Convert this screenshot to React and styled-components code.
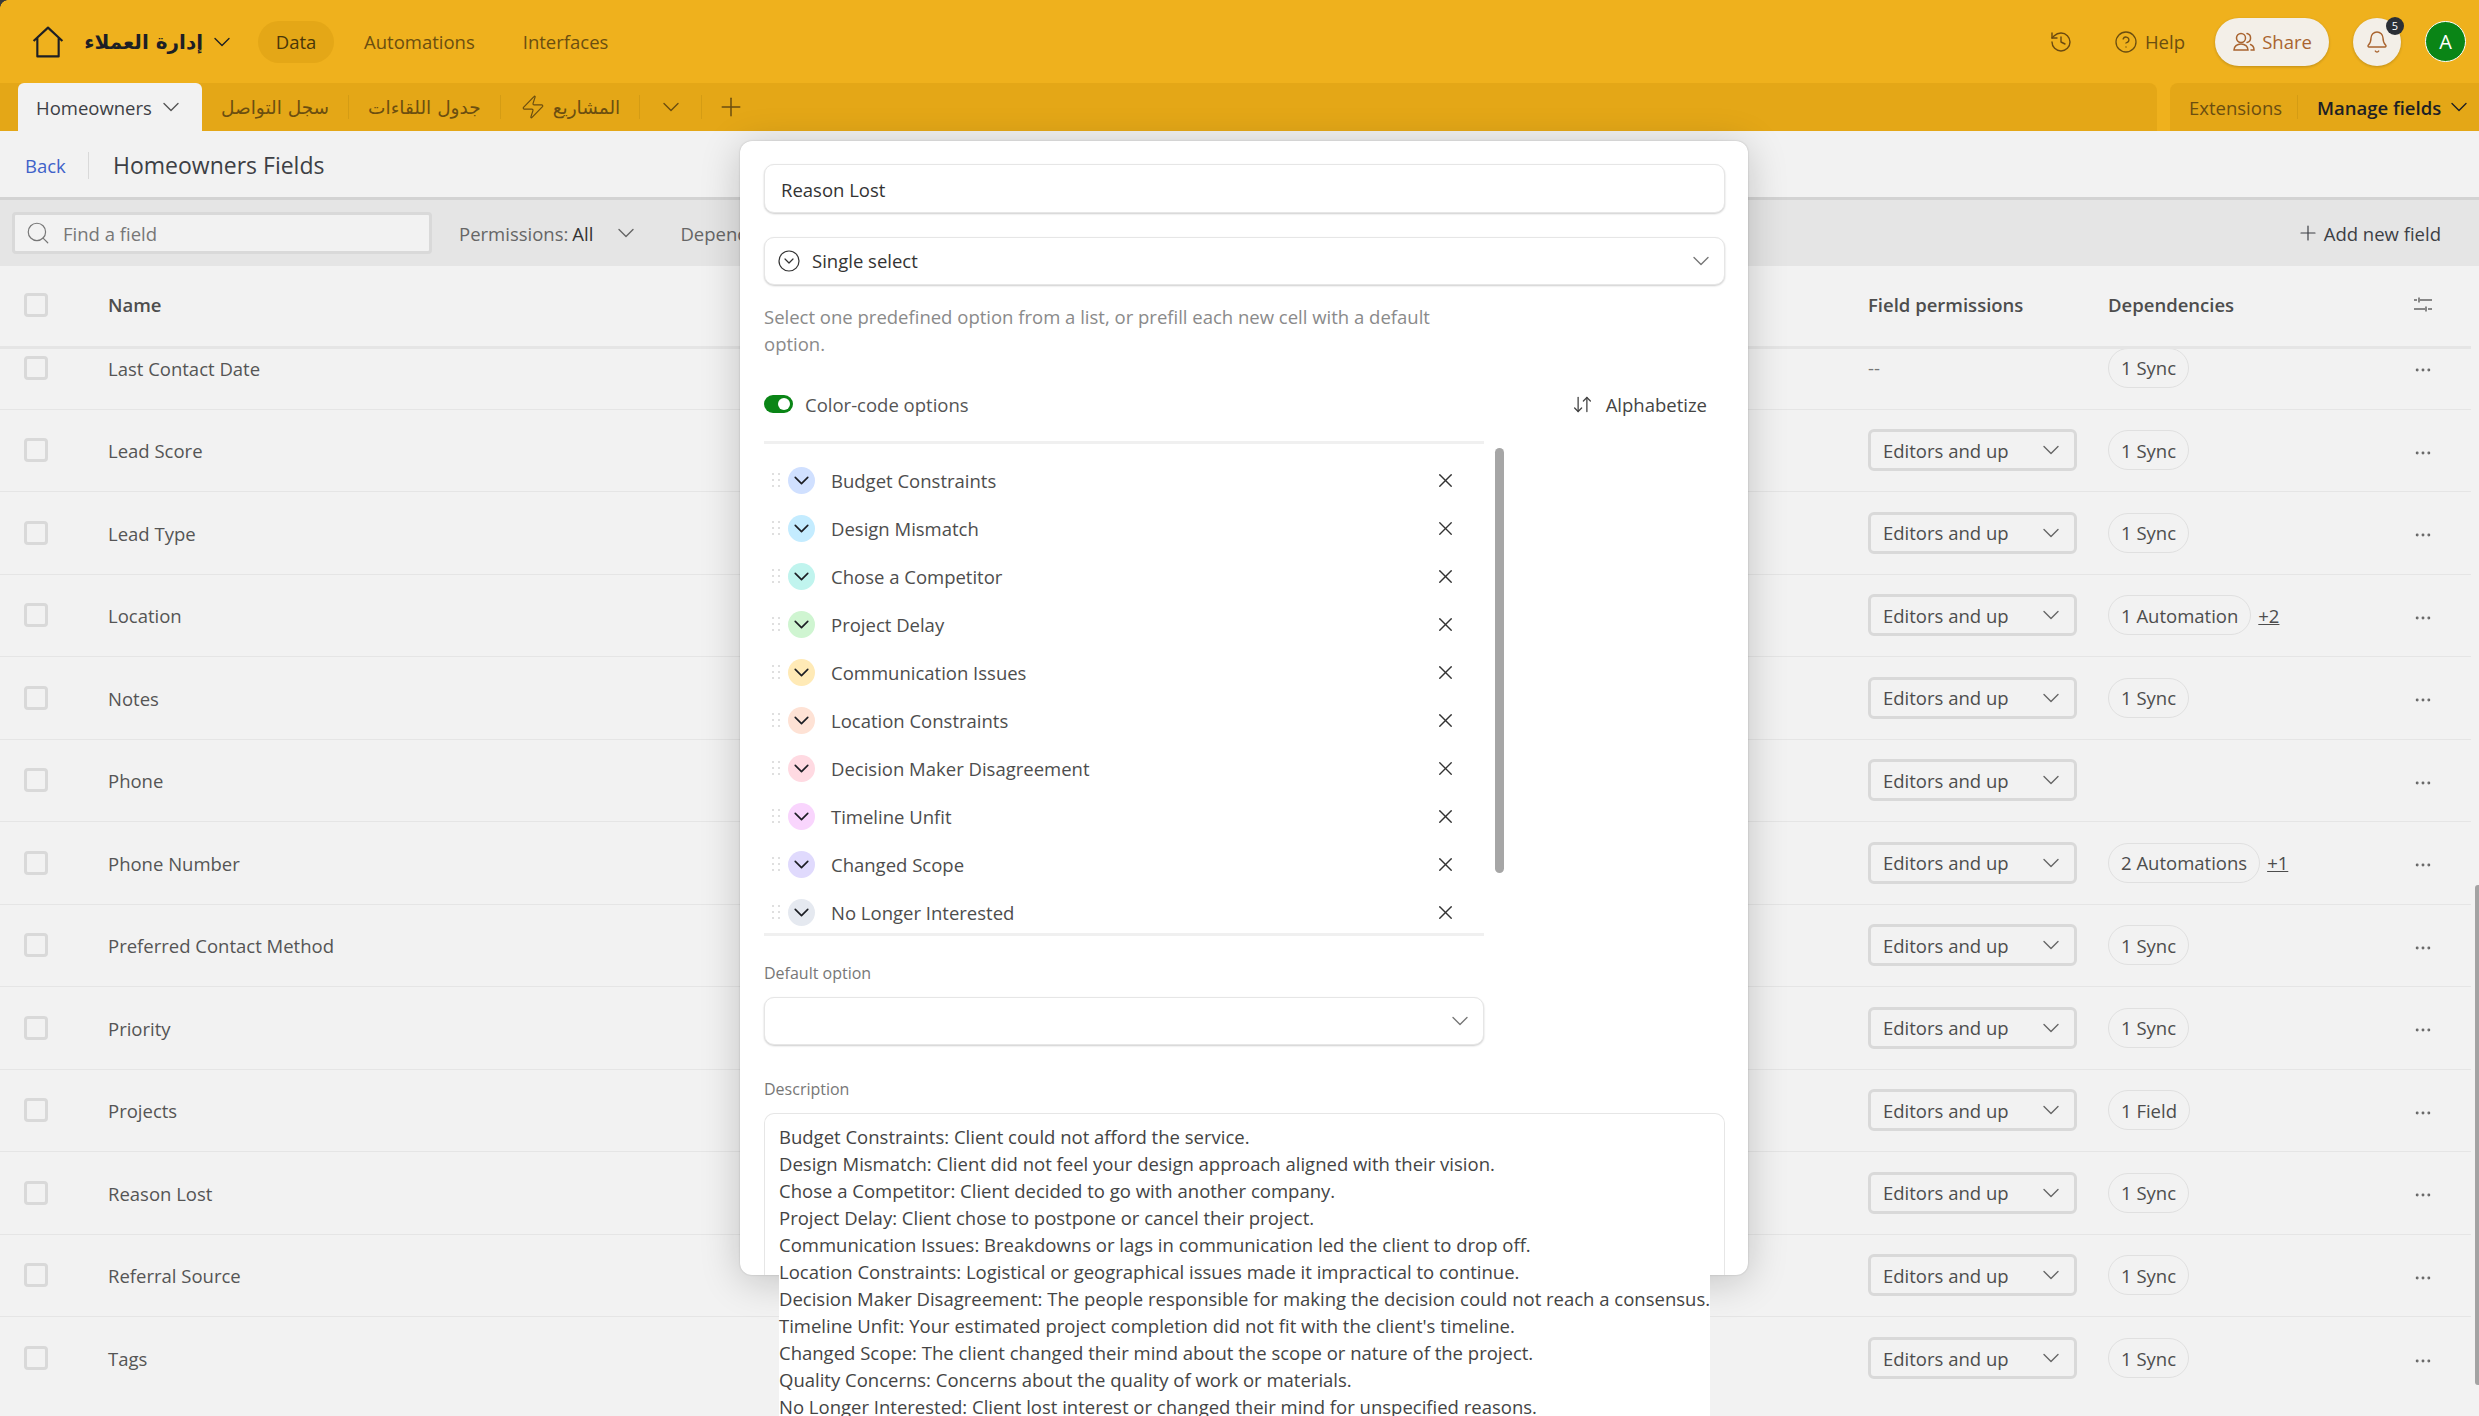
import React from "react";
import styled, { createGlobalStyle } from "styled-components";
import {
  ChevronDown,
  History,
  CircleHelp,
  Bell,
  Search,
  Plus,
  Zap,
  X,
  ArrowDownUp,
  Ellipsis,
  CircleChevronDown,
} from "lucide-react";

const fields = [
  { name: "Last Contact Date", noPerm: true, dep: "1 Sync" },
  { name: "Lead Score", dep: "1 Sync" },
  { name: "Lead Type", dep: "1 Sync" },
  { name: "Location", dep: "1 Automation", more: "+2" },
  { name: "Notes", dep: "1 Sync" },
  { name: "Phone" },
  { name: "Phone Number", dep: "2 Automations", more: "+1" },
  { name: "Preferred Contact Method", dep: "1 Sync" },
  { name: "Priority", dep: "1 Sync" },
  { name: "Projects", dep: "1 Field" },
  { name: "Reason Lost", dep: "1 Sync" },
  { name: "Referral Source", dep: "1 Sync" },
  { name: "Tags", dep: "1 Sync" },
];

const options = [
  ["Budget Constraints", "#d0e0ff"],
  ["Design Mismatch", "#c4ecff"],
  ["Chose a Competitor", "#c0f4ee"],
  ["Project Delay", "#cff5d1"],
  ["Communication Issues", "#ffeab6"],
  ["Location Constraints", "#fee2d5"],
  ["Decision Maker Disagreement", "#ffdae2"],
  ["Timeline Unfit", "#f9d5fd"],
  ["Changed Scope", "#e0dafd"],
  ["No Longer Interested", "#e5e9f0"],
];

const descLines = [
  "Budget Constraints: Client could not afford the service.",
  "Design Mismatch: Client did not feel your design approach aligned with their vision.",
  "Chose a Competitor: Client decided to go with another company.",
  "Project Delay: Client chose to postpone or cancel their project.",
  "Communication Issues: Breakdowns or lags in communication led the client to drop off.",
  "Location Constraints: Logistical or geographical issues made it impractical to continue.",
  "Decision Maker Disagreement: The people responsible for making the decision could not reach a consensus.",
  "Timeline Unfit: Your estimated project completion did not fit with the client's timeline.",
  "Changed Scope: The client changed their mind about the scope or nature of the project.",
  "Quality Concerns: Concerns about the quality of work or materials.",
  "No Longer Interested: Client lost interest or changed their mind for unspecified reasons.",
];

const Chevron = ({ color }) => <ChevronDown size={28} strokeWidth={1.2} color={color} />;

const App = () => {
  return (
    <Page>
      <GlobalStyle />
      <TopBar>
        <HomeIcon viewBox="0 0 30 30" fill="none">
          <path d="M1.5 14 15 1.500 28.500 14M5 11v17.500h20V11" stroke="#1d1f25" strokeWidth="2" strokeLinejoin="round" />
        </HomeIcon>
        <BaseName dir="rtl">إدارة العملاء</BaseName>
        <Chevron color="#1d1f25" />
        <NavPill>Data</NavPill>
        <NavLink>Automations</NavLink>
        <NavLink>Interfaces</NavLink>
        <TopRight>
          <History size={24} strokeWidth={1.4} color="#6b4a10" />
          <HelpLink>
            <CircleHelp size={24} strokeWidth={1.3} />
            Help
          </HelpLink>
          <ShareButton>
            <svg width="24" height="24" viewBox="0 0 24 24" fill="none" stroke="currentColor" strokeWidth="1.500" strokeLinecap="round">
              <circle cx="9" cy="8" r="4.500" />
              <path d="M2 20c0-3.500 3-6 7-6s7 2.500 7 6zM15 3.600a4.500 4.500 0 0 1 0 8.800M18.500 14.500c2.200.8 3.500 2.900 3.500 5.500h-3" />
            </svg>
            Share
          </ShareButton>
          <BellButton>
            <Bell size={24} strokeWidth={1.4} />
            <Badge>5</Badge>
          </BellButton>
          <Avatar>A</Avatar>
        </TopRight>
      </TopBar>

      <TabBar>
        <TabsLeft>
          <ActiveTab>
            Homeowners
            <Chevron color="#555" />
          </ActiveTab>
          <Tab dir="rtl">سجل التواصل</Tab>
          <TabDivider />
          <Tab dir="rtl">جدول اللقاءات</Tab>
          <TabDivider />
          <Tab>
            <Zap size={26} strokeWidth={1.1} />
            <span dir="rtl">المشاريع</span>
          </Tab>
          <TabDivider />
          <TabChevron>
            <Chevron />
          </TabChevron>
          <TabDivider />
          <TabPlus>
            <Plus size={30} strokeWidth={1.2} />
          </TabPlus>
        </TabsLeft>
        <TabsRight>
          <Extensions>Extensions</Extensions>
          <TabDivider />
          <ManageFields>
            Manage fields
            <Chevron />
          </ManageFields>
        </TabsRight>
      </TabBar>

      <SubHeader>
        <BackLink>Back</BackLink>
        <SubDivider />
        <SubTitle>Homeowners Fields</SubTitle>
      </SubHeader>

      <Toolbar>
        <SearchBox>
          <Search size={26} strokeWidth={1.1} color="#777" />
          Find a field
        </SearchBox>
        <Filter>
          Permissions: <b>All</b>
          <Chevron />
        </Filter>
        <Filter>Dependencies: All</Filter>
        <AddField>
          <Plus size={24} strokeWidth={1.2} />
          Add new field
        </AddField>
      </Toolbar>

      <Table>
        <HeadRow>
          <Checkbox />
          <HeadCell>Name</HeadCell>
          <HeadCell>Field permissions</HeadCell>
          <HeadCell>Dependencies</HeadCell>
          <TuneIcon viewBox="0 0 20 20" fill="none" stroke="#666" strokeWidth="1.500">
            <path d="M1 5h3M7 5h12M6 2.500v5M1 14h11M15 14h4M13 11.500v5" />
          </TuneIcon>
        </HeadRow>
        <RowClip>
          <Rows>
            {fields.map((f) => (
              <Row key={f.name}>
                <Checkbox />
                <FieldName>{f.name}</FieldName>
                {f.noPerm ? (
                  <NoPerm>--</NoPerm>
                ) : (
                  <PermSelect>
                    Editors and up
                    <Chevron color="#666" />
                  </PermSelect>
                )}
                <Deps>
                  {f.dep && <DepPill>{f.dep}</DepPill>}
                  {f.more && <More>{f.more}</More>}
                </Deps>
                <RowMenu size={20} strokeWidth={1.5} color="#666" />
              </Row>
            ))}
          </Rows>
        </RowClip>
      </Table>

      <PageScroll />

      <Modal>
        <Input>Reason Lost</Input>
        <TypeSelect>
          <CircleChevronDown size={24} strokeWidth={1.2} />
          <span>Single select</span>
          <Chevron color="#777" />
        </TypeSelect>
        <Hint>
          Select one predefined option from a list, or prefill each new cell with a default option.
        </Hint>
        <ColorRow>
          <Toggle />
          <ToggleLabel>Color-code options</ToggleLabel>
          <Alphabetize>
            <ArrowDownUp size={21} strokeWidth={1.5} />
            Alphabetize
          </Alphabetize>
        </ColorRow>
        <ListArea>
          <OptionList>
            {options.map(([label, color]) => (
              <OptionRow key={label}>
                <Grip viewBox="0 0 10 16" fill="#d4d4d4">
                  <circle cx="2" cy="2" r="1" />
                  <circle cx="8" cy="2" r="1" />
                  <circle cx="2" cy="8" r="1" />
                  <circle cx="8" cy="8" r="1" />
                  <circle cx="2" cy="14" r="1" />
                  <circle cx="8" cy="14" r="1" />
                </Grip>
                <OptionDot $color={color}>
                  <ChevronDown size={25} strokeWidth={1.6} color="#1d1f25" />
                </OptionDot>
                <OptionLabel>{label}</OptionLabel>
                <X size={23} strokeWidth={1.4} color="#333" />
              </OptionRow>
            ))}
          </OptionList>
          <ListScroll />
        </ListArea>
        <SmallLabel>Default option</SmallLabel>
        <DefaultSelect>
          <Chevron color="#777" />
        </DefaultSelect>
        <DescLabel>Description</DescLabel>
        <DescBox>
          <DescText>
            {descLines.map((l) => (
              <div key={l}>{l}</div>
            ))}
          </DescText>
        </DescBox>
      </Modal>
    </Page>
  );
};

export default App;

const GlobalStyle = createGlobalStyle`
  html, body {
    margin: 0;
    padding: 0;
    background: #f2f2f2;
  }
  * {
    box-sizing: border-box;
  }
`;

const Page = styled.div`
  position: relative;
  width: 2479px;
  height: 1416px;
  overflow: hidden;
  background: #f2f2f2;
  font-family: "Open Sans", "DejaVu Sans", sans-serif;
  font-size: 18.5px;
  color: #4d4d4d;
`;

const TopBar = styled.div`
  position: relative;
  height: 83px;
  background: #efb11d;
  display: flex;
  align-items: center;
  padding: 0 13px 0 32px;
  &::before {
    content: "";
    position: absolute;
    left: 0;
    top: 0;
    width: 8px;
    height: 8px;
    background: radial-gradient(circle at 100% 100%, transparent 7.5px, #3a3a3a 8px);
  }
`;

const HomeIcon = styled.svg`
  width: 32px;
  height: 32px;
  margin-right: 20px;
`;

const BaseName = styled.div`
  width: 119px;
  margin-right: 5px;
  font-family: "DejaVu Sans", sans-serif;
  font-size: 20px;
  font-weight: 600;
  white-space: nowrap;
  color: #1d1f25;
`;

const NavPill = styled.div`
  margin-left: 22px;
  width: 76px;
  height: 42px;
  border-radius: 21px;
  background: #e4a717;
  display: flex;
  align-items: center;
  justify-content: center;
  color: #4a3608;
`;

const NavLink = styled.div`
  margin-left: 30px;
  margin-right: 18px;
  color: #6b4e10;
`;

const TopRight = styled.div`
  margin-left: auto;
  display: flex;
  align-items: center;
`;

const HelpLink = styled.div`
  display: flex;
  align-items: center;
  gap: 7px;
  margin-left: 41px;
  color: #6b4e10;
`;

const ShareButton = styled.div`
  margin-left: 30px;
  width: 114px;
  height: 48px;
  border-radius: 24px;
  background: #f3efe8;
  box-shadow: 0 1px 3px rgba(0, 0, 0, 0.2);
  display: flex;
  align-items: center;
  justify-content: center;
  gap: 6px;
  color: #a9642f;
`;

const BellButton = styled.div`
  position: relative;
  margin-left: 24px;
  width: 48px;
  height: 48px;
  border-radius: 50%;
  background: #f3efe8;
  box-shadow: 0 1px 3px rgba(0, 0, 0, 0.2);
  display: flex;
  align-items: center;
  justify-content: center;
  color: #a9642f;
`;

const Badge = styled.div`
  position: absolute;
  top: -1px;
  right: -3px;
  width: 18px;
  height: 18px;
  border-radius: 50%;
  background: #2b2f36;
  color: #fff;
  font-size: 11px;
  display: flex;
  align-items: center;
  justify-content: center;
`;

const Avatar = styled.div`
  margin-left: 24px;
  width: 41px;
  height: 41px;
  border-radius: 50%;
  background: #0a8516;
  border: 1px solid #fff;
  color: #fff;
  font-size: 20px;
  display: flex;
  align-items: center;
  justify-content: center;
`;

const TabBar = styled.div`
  height: 48px;
  display: flex;
  gap: 13px;
  background: #efb11d;
`;

const TabsLeft = styled.div`
  flex: 1;
  background: #e4a717;
  border-top-right-radius: 8px;
  padding-left: 18px;
  display: flex;
  align-items: center;
`;

const TabsRight = styled.div`
  width: 309px;
  background: #e4a717;
  border-top-left-radius: 8px;
  padding-left: 19px;
  display: flex;
  align-items: center;
`;

const ActiveTab = styled.div`
  width: 184px;
  height: 48px;
  background: #f2f2f2;
  border-radius: 6px 6px 0 0;
  display: flex;
  align-items: center;
  gap: 5px;
  padding-left: 18px;
  color: #3d3f45;
`;

const Tab = styled.div`
  font-family: "DejaVu Sans", sans-serif;
  display: flex;
  align-items: center;
  gap: 7px;
  font-size: 18.5px;
  color: #6b4e10;
  padding: 0 19px 0 19px;
`;

const TabChevron = styled.div`
  display: flex;
  align-items: center;
  padding: 0 16px 0 17px;
  color: #6b4e10;
`;

const TabPlus = styled.div`
  display: flex;
  align-items: center;
  padding-left: 14px;
  color: #6b4e10;
`;

const TabDivider = styled.div`
  width: 1px;
  height: 24px;
  background: #d49c14;
`;

const Extensions = styled.div`
  width: 108px;
  color: #6b4e10;
`;

const ManageFields = styled.div`
  margin-left: 19px;
  display: flex;
  align-items: center;
  gap: 4px;
  font-weight: 600;
  white-space: nowrap;
  color: #1d1f25;
`;

const SubHeader = styled.div`
  height: 69px;
  border-bottom: 3px solid #d3d3d3;
  display: flex;
  align-items: center;
  padding: 2px 0 0 25px;
`;

const BackLink = styled.div`
  width: 39px;
  color: #3f62c9;
  margin-right: 24px;
`;

const SubDivider = styled.div`
  width: 1px;
  height: 27px;
  background: #d9d9d9;
  margin-right: 24px;
`;

const SubTitle = styled.div`
  font-size: 23px;
  color: #3d3f45;
`;

const Toolbar = styled.div`
  height: 66px;
  background: #e5e5e5;
  display: flex;
  align-items: center;
  padding: 0 38px 0 12px;
`;

const SearchBox = styled.div`
  width: 420px;
  height: 42px;
  background: #f2f2f2;
  border: 3px solid #d9d9d9;
  border-radius: 4px;
  display: flex;
  align-items: center;
  gap: 12px;
  padding-left: 10px;
  color: #777;
`;

const Filter = styled.div`
  display: flex;
  align-items: center;
  margin-left: 27px;
  margin-right: 13px;
  color: #666;
  gap: 4px;
  b {
    font-weight: 400;
    color: #333;
  }
  svg {
    margin-left: 15px;
  }
`;

const AddField = styled.div`
  margin-left: auto;
  display: flex;
  align-items: center;
  gap: 4px;
  color: #3d3f45;
`;

const Table = styled.div`
  width: 2471px;
`;

const rowGrid = `
  display: grid;
  grid-template-columns: 108px 1760px 240px 307px 56px;
  align-items: center;
`;

const HeadRow = styled.div`
  ${rowGrid}
  height: 83px;
  padding-bottom: 3px;
  border-bottom: 3px solid #e5e5e5;
`;

const HeadCell = styled.div`
  font-weight: 600;
  color: #4d4d4d;
`;

const TuneIcon = styled.svg`
  width: 20px;
  height: 20px;
  margin-left: -2px;
`;

const Checkbox = styled.div`
  width: 24px;
  height: 24px;
  margin-left: 24px;
  border: 3px solid #d9d9d9;
  border-radius: 4px;
`;

const RowClip = styled.div`
  overflow: hidden;
`;

const Rows = styled.div`
  margin-top: -22px;
`;

const Row = styled.div`
  ${rowGrid}
  height: 82.5px;
  border-bottom: 1px solid #e5e5e5;
  &:last-child {
    border-bottom: 0;
  }
`;

const RowMenu = styled(Ellipsis)`
  margin: 5px 0 0 -2px;
`;

const FieldName = styled.div`
  padding-top: 1px;
  color: #555;
`;

const NoPerm = styled.div`
  color: #777;
`;

const PermSelect = styled.div`
  width: 209px;
  height: 42px;
  border: 3px solid #d9d9d9;
  border-radius: 6px;
  display: flex;
  align-items: center;
  justify-content: space-between;
  padding: 0 9px 0 12px;
`;

const Deps = styled.div`
  display: flex;
  align-items: center;
  gap: 7px;
`;

const DepPill = styled.div`
  height: 40px;
  padding: 0 12px;
  border: 1px solid #e0e0e0;
  border-radius: 20px;
  display: flex;
  align-items: center;
`;

const More = styled.div`
  text-decoration: underline;
`;

const PageScroll = styled.div`
  position: absolute;
  right: 0;
  top: 885px;
  width: 4px;
  height: 500px;
  border-radius: 3px 0 0 3px;
  background: #a3a3a3;
`;

const Modal = styled.div`
  position: absolute;
  left: 740px;
  top: 141px;
  width: 1008px;
  height: 1134px;
  background: #fff;
  border-radius: 12px;
  box-shadow: 0 0 2px rgba(0, 0, 0, 0.2), 0 6px 40px rgba(0, 0, 0, 0.2);
  padding: 23px 23px 0 24px;
`;

const fieldBox = `
  border: 1px solid #e6e6e6;
  border-radius: 10px;
  box-shadow: 0 1px 2px rgba(0, 0, 0, 0.2);
  background: #fff;
`;

const Input = styled.div`
  ${fieldBox}
  height: 49px;
  display: flex;
  align-items: center;
  padding: 2px 0 0 16px;
  color: #333;
`;

const TypeSelect = styled.div`
  ${fieldBox}
  margin-top: 24px;
  height: 48px;
  display: flex;
  align-items: center;
  padding: 0 9px 0 12px;
  gap: 11px;
  color: #333;
  span {
    flex: 1;
    padding-bottom: 2px;
  }
`;

const Hint = styled.div`
  margin-top: 18px;
  width: 690px;
  line-height: 27px;
  color: #8a8a8a;
`;

const ColorRow = styled.div`
  margin-top: 38px;
  height: 18px;
  display: flex;
  align-items: center;
`;

const Toggle = styled.div`
  width: 29px;
  height: 18px;
  border-radius: 9px;
  background: #0a8516;
  position: relative;
  &::after {
    content: "";
    position: absolute;
    right: 3px;
    top: 3px;
    width: 12px;
    height: 12px;
    border-radius: 50%;
    background: #fff;
  }
`;

const ToggleLabel = styled.div`
  margin-left: 12px;
  color: #555;
`;

const Alphabetize = styled.div`
  margin-left: auto;
  margin-right: 18px;
  display: flex;
  align-items: center;
  gap: 13px;
  color: #444;
`;

const ListArea = styled.div`
  margin-top: 28px;
  display: flex;
  gap: 11px;
`;

const OptionList = styled.div`
  width: 720px;
  height: 495px;
  border-top: 3px solid #f0f0f0;
  border-bottom: 3px solid #f0f0f0;
  padding-top: 12px;
`;

const OptionRow = styled.div`
  height: 48px;
  display: flex;
  align-items: center;
  padding-left: 7px;
  padding-right: 27px;
`;

const Grip = styled.svg`
  width: 10px;
  height: 16px;
  margin-right: 7px;
`;

const OptionDot = styled.div`
  width: 27px;
  height: 27px;
  border-radius: 50%;
  background: ${(p) => p.$color};
  display: flex;
  align-items: center;
  justify-content: center;
`;

const OptionLabel = styled.div`
  flex: 1;
  margin-left: 16px;
  color: #4d4d4d;
`;

const ListScroll = styled.div`
  width: 9px;
  height: 425px;
  margin-top: 7px;
  border-radius: 5px;
  background: #a6a6a6;
`;

const SmallLabel = styled.div`
  margin-top: 26px;
  font-size: 16px;
  line-height: 22px;
  color: #777;
`;

const DefaultSelect = styled.div`
  ${fieldBox}
  width: 720px;
  height: 48px;
  margin-top: 13px;
  display: flex;
  align-items: center;
  justify-content: flex-end;
  padding-right: 9px;
`;

const DescLabel = styled(SmallLabel)`
  margin-top: 33px;
`;

const DescBox = styled.div`
  margin-top: 13px;
  height: 162px;
  border: 1px solid #e6e6e6;
  border-bottom: 0;
  border-radius: 10px 10px 0 0;
  padding: 9px 14px 0;
`;

const DescText = styled.div`
  background: #fff;
  line-height: 27px;
  color: #444;
  white-space: nowrap;
`;
